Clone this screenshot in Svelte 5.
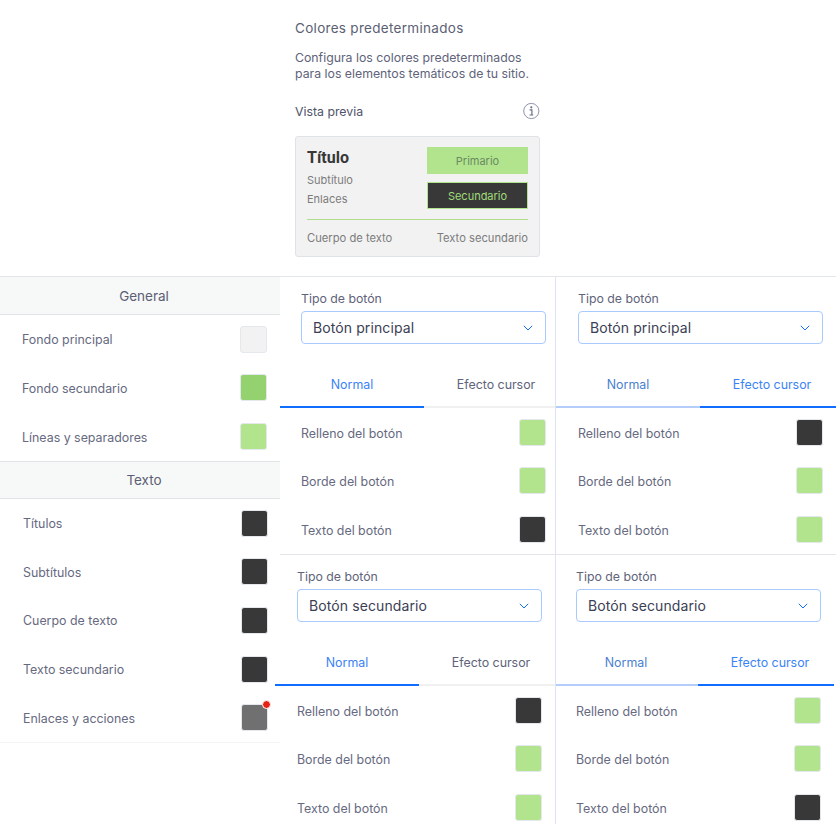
<script>
  const G = '#b1e48d';
  const D = '#383838';

  const general = [
    { label: 'Fondo principal', color: '#f2f2f2' },
    { label: 'Fondo secundario', color: '#94d16f' },
    { label: 'Líneas y separadores', color: G }
  ];
  const texto = [
    { label: 'Títulos', color: D },
    { label: 'Subtítulos', color: D },
    { label: 'Cuerpo de texto', color: D },
    { label: 'Texto secundario', color: D },
    { label: 'Enlaces y acciones', color: '#707070', dot: true }
  ];

  const rowLabels = ['Relleno del botón', 'Borde del botón', 'Texto del botón'];
  const panels = [
    { cls: 'tl', select: 'Botón principal', hover: false, colors: [G, G, D] },
    { cls: 'tr', select: 'Botón principal', hover: true, colors: [D, G, G] },
    { cls: 'bl', select: 'Botón secundario', hover: false, colors: [D, G, G] },
    { cls: 'br', select: 'Botón secundario', hover: true, colors: [G, G, D] }
  ];
</script>

{#snippet panel(p)}
  <section class="panel {p.cls}">
    <div class="type">
      <div class="type-label">Tipo de botón</div>
      <div class="select">
        <span>{p.select}</span>
        <svg width="10" height="6" viewBox="0 0 10 6" fill="none"><path d="M0.8 0.8 L5 5 L9.2 0.8" stroke="#116dff" stroke-width="1"/></svg>
      </div>
    </div>
    <div class="tabs">
      <div class="tab" class:active={!p.hover} class:dim={p.hover}>Normal</div>
      <div class="tab" class:active={p.hover}>Efecto cursor</div>
    </div>
    <div class="rows">
      {#each rowLabels as label, i}
        <div class="row">
          <span>{label}</span>
          <i class="swatch" style="background: {p.colors[i]}"></i>
        </div>
      {/each}
    </div>
  </section>
{/snippet}

<div class="page">
  <header class="top">
    <div class="intro">
      <h1>Colores predeterminados</h1>
      <p>Configura los colores predeterminados<br />para los elementos temáticos de tu sitio.</p>
      <div class="preview-head">
        <span>Vista previa</span>
        <svg width="18" height="18" viewBox="0 0 18 18" fill="none">
          <circle cx="9.3" cy="9" r="7.6" stroke="#8f93ad" stroke-width="1"/>
          <circle cx="9.3" cy="5.3" r="1.1" fill="#6a6e8c"/>
          <path d="M7.6 7.9 H9.9 V12.6 M7.5 13 H11.2" stroke="#6a6e8c" stroke-width="1.2"/>
        </svg>
      </div>
      <div class="card">
        <div class="card-main">
          <div class="card-text">
            <div class="title">Título</div>
            <div class="sub">Subtítulo</div>
            <div class="link">Enlaces</div>
          </div>
          <div class="card-btns">
            <div class="btn primary">Primario</div>
            <div class="btn secondary">Secundario</div>
          </div>
        </div>
        <div class="card-foot">
          <span>Cuerpo de texto</span>
          <span>Texto secundario</span>
        </div>
      </div>
    </div>
  </header>

  <main class="bottom">
    <aside class="side">
      <div class="side-head">General</div>
      <div class="side-group">
        {#each general as item}
          <div class="side-row">
            <span>{item.label}</span>
            <i class="swatch" style="background: {item.color}"></i>
          </div>
        {/each}
      </div>
      <div class="side-head second">Texto</div>
      <div class="side-group text">
        {#each texto as item}
          <div class="side-row">
            <span>{item.label}</span>
            <i class="swatch" class:dot={item.dot} style="background: {item.color}"></i>
          </div>
        {/each}
      </div>
    </aside>

    <div class="panels">
      <div class="panel-row first">
        {@render panel(panels[0])}
        {@render panel(panels[1])}
      </div>
      <div class="panel-row second">
        {@render panel(panels[2])}
        {@render panel(panels[3])}
      </div>
    </div>
  </main>
</div>

<style>
  :global(body) {
    background: #fff;
  }

  .page {
    width: 836px;
    font-family: Inter, "Liberation Sans", sans-serif;
    color: #666980;
  }

  .top {
    height: 277px;
    box-sizing: border-box;
    border-bottom: 1px solid #e2e5ea;
    padding-left: 295px;
  }

  .intro {
    width: 245px;
    padding-top: 20px;
  }

  h1 {
    margin: 0;
    font-size: 13.5px;
    font-weight: 400;
    line-height: 17px;
    color: #5c5f74;
    letter-spacing: 0.3px;
  }

  p {
    margin: 13px 0 0;
    font-size: 12.3px;
    line-height: 16px;
    color: #60637a;
  }

  .preview-head {
    margin-top: 20px;
    height: 18px;
    display: flex;
    justify-content: space-between;
    align-items: center;
    font-size: 12.3px;
    color: #50536a;
  }

  .card {
    margin-top: 16px;
    height: 121px;
    box-sizing: border-box;
    background: #f2f2f2;
    border: 1px solid #dfe3e8;
    border-radius: 3px;
    padding: 10px 11px 0;
    color: #7c7c7c;
  }

  .card-main {
    display: flex;
    justify-content: space-between;
    height: 72px;
    border-bottom: 1px solid #aedd8c;
  }

  .title {
    margin-top: 1px;
    font-family: Roboto, "Liberation Sans", sans-serif;
    font-weight: 700;
    font-size: 16px;
    line-height: 20px;
    color: #383838;
  }

  .sub,
  .link {
    font-size: 11px;
    line-height: 19px;
  }

  .sub {
    margin-top: 3px;
  }

  .card-btns {
    width: 101px;
    display: flex;
    flex-direction: column;
    gap: 8px;
  }

  .btn {
    height: 27px;
    box-sizing: border-box;
    display: flex;
    align-items: center;
    justify-content: center;
    font-size: 11px;
  }

  .primary {
    background: #b1e48d;
    color: #6b8a63;
  }

  .secondary {
    background: #383838;
    border: 1px solid #b1e48d;
    color: #a0dc7a;
  }

  .card-foot {
    display: flex;
    justify-content: space-between;
    margin-top: 11px;
    font-size: 11.2px;
    line-height: 14px;
  }

  .bottom {
    display: flex;
    align-items: flex-start;
    font-size: 12.4px;
  }

  .side {
    width: 280px;
    flex: none;
  }

  .side-head {
    height: 38px;
    box-sizing: border-box;
    background: #f7f8f8;
    border-bottom: 1px solid #e2e5ea;
    display: flex;
    align-items: center;
    justify-content: center;
    padding-left: 8px;
    font-size: 13.5px;
    color: #5c5f74;
  }

  .side-head.second {
    border-top: 1px solid #e2e5ea;
  }

  .side-group {
    padding: 0 13px 0 22px;
  }

  .side-group.text {
    padding: 0 12px 0 23px;
    border-bottom: 1px solid #f3f4f5;
  }

  .side-row {
    height: 48.67px;
    display: flex;
    align-items: center;
    justify-content: space-between;
  }

  .side-group.text .side-row {
    height: 48.6px;
  }

  .side-row span {
    padding-top: 1px;
  }

  .swatch {
    display: block;
    position: relative;
    width: 27px;
    height: 27px;
    box-sizing: border-box;
    border: 1px solid #e4e8ec;
    border-radius: 3px;
    flex: none;
  }

  .swatch.dot::after {
    content: '';
    position: absolute;
    top: -5px;
    right: -4px;
    width: 7px;
    height: 7px;
    background: #e62214;
    border: 1px solid #fff;
    border-radius: 50%;
  }

  .panels {
    width: 556px;
    flex: none;
  }

  .panel-row {
    display: flex;
  }

  .panel-row.first {
    height: 277px;
    border-bottom: 1px solid #e2e5ea;
  }

  .panel-row.second {
    height: 269px;
    margin-left: -5px;
  }

  .panel {
    box-sizing: border-box;
    overflow: hidden;
    padding-top: 14px;
  }

  .tl {
    width: 276px;
    border-right: 1px solid #dfe5f0;
  }

  .tr {
    width: 280px;
  }

  .bl {
    width: 281px;
    border-right: 1px solid #dfe5f0;
  }

  .br {
    width: 278px;
  }

  .type,
  .rows {
    width: 245px;
    margin-left: 22px;
  }

  .tl .type,
  .tl .rows {
    margin-left: 21px;
  }

  .br .type,
  .br .rows {
    margin-left: 20px;
  }

  .type-label {
    font-size: 12.3px;
    line-height: 16px;
    color: #60637a;
  }

  .select {
    margin-top: 4px;
    height: 33px;
    box-sizing: border-box;
    border: 1px solid #a8caff;
    border-radius: 4px;
    padding: 0 12px 0 11px;
    display: flex;
    align-items: center;
    justify-content: space-between;
    font-size: 14px;
    letter-spacing: 0.1px;
    color: #3b3e54;
  }

  .tabs {
    display: flex;
    margin-top: 18px;
    width: 288px;
  }

  .br .tabs {
    margin-left: -2px;
  }

  .tab {
    width: 144px;
    height: 46px;
    flex: none;
    box-sizing: border-box;
    display: flex;
    align-items: center;
    justify-content: center;
    border-bottom: 2px solid #f0f0f0;
    color: #60637a;
  }

  .tab.active {
    border-bottom-color: #116dff;
    color: #3b82f6;
  }

  .tab.dim {
    border-bottom-color: #b4cdfa;
    color: #4a7fd0;
  }

  .row {
    height: 48.5px;
    display: flex;
    align-items: center;
    justify-content: space-between;
  }

  .row span {
    padding-top: 2px;
  }
</style>
